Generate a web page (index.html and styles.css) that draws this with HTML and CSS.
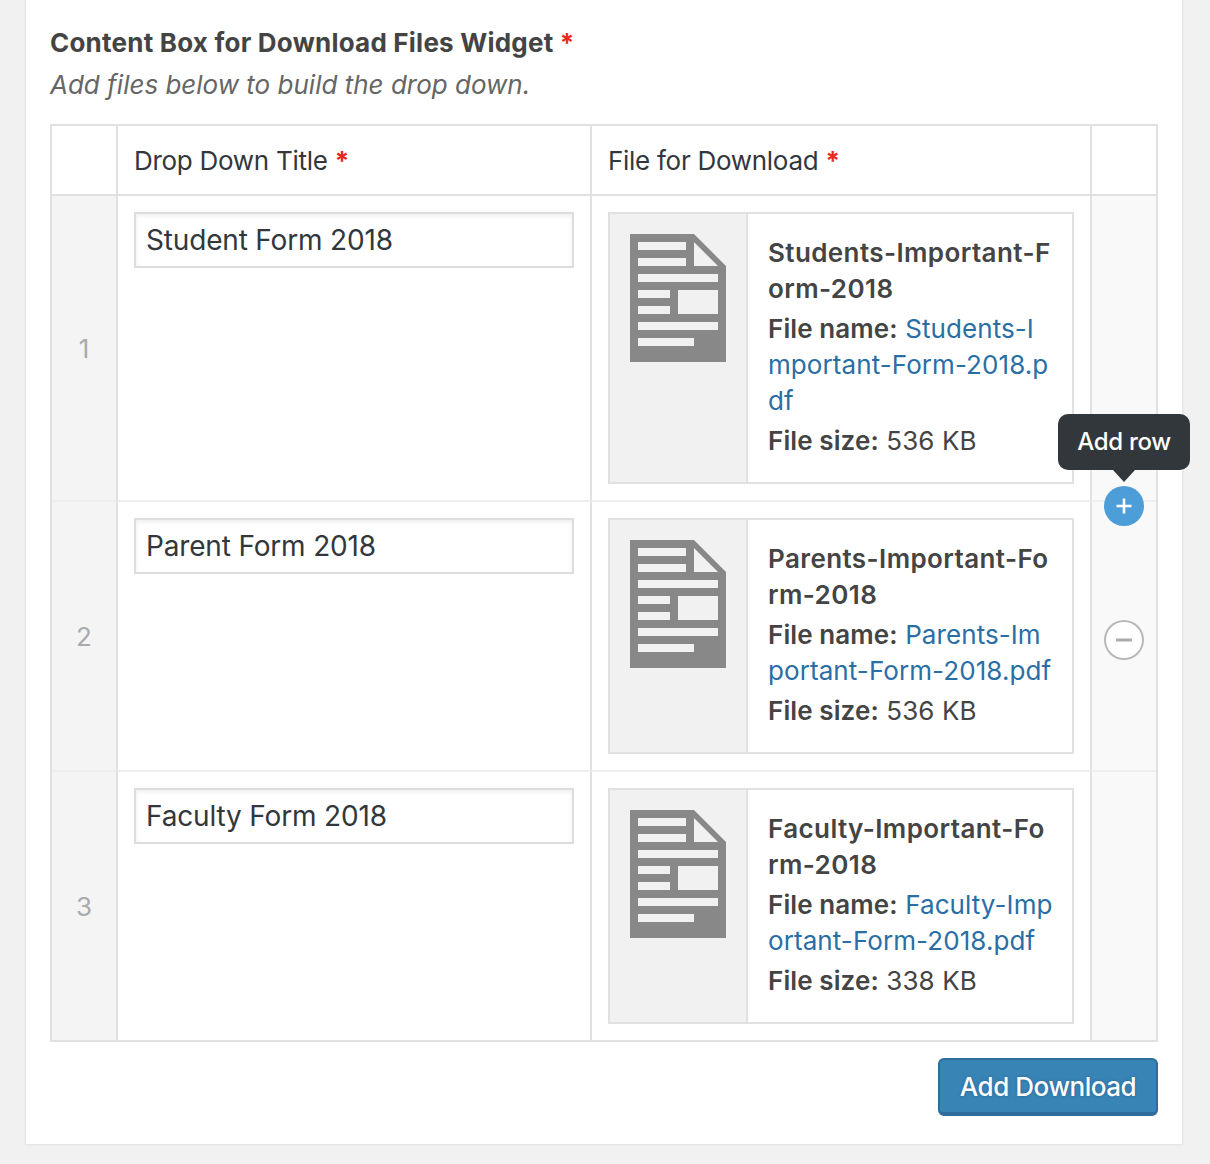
FILE: index.html
```html
<!DOCTYPE html>
<html lang="en">
<head>
<meta charset="utf-8">
<title>Content Box for Download Files Widget</title>
<link rel="stylesheet" href="styles.css">
</head>
<body>
<svg class="sprite" width="0" height="0" aria-hidden="true">
  <symbol id="doc" viewBox="0 0 96 128">
    <path fill="#888" fill-rule="evenodd" d="M0 0H64L96 32V128H0ZM8 8V16H56V8ZM8 24V32H56V24ZM64 8V32H88ZM8 40V48H88V40ZM8 56V64H40V56ZM48 56V80H88V56ZM8 72V80H40V72ZM8 88V96H88V88ZM8 104V112H64V104Z"/>
  </symbol>
</svg>
<main class="panel">
  <h2 class="field-label">Content Box for Download Files Widget <span class="req">*</span></h2>
  <p class="field-desc">Add files below to build the drop down.</p>
  <table class="repeater">
    <thead>
      <tr>
        <th class="col-order"></th>
        <th class="col-title">Drop Down Title <span class="req">*</span></th>
        <th class="col-file">File for Download <span class="req">*</span></th>
        <th class="col-actions"></th>
      </tr>
    </thead>
    <tbody>
      <tr>
        <td class="cell-order">1</td>
        <td class="cell-title"><input class="text-input" type="text" value="Student Form 2018"></td>
        <td class="cell-file">
          <div class="file-box">
            <div class="file-thumb"><svg class="doc-icon"><use href="#doc"/></svg></div>
            <div class="file-info">
              <p class="file-name">Students-Important-Form-2018</p>
              <p><strong>File name:</strong> <a href="#">Students-Important-Form-2018.pdf</a></p>
              <p><strong>File size:</strong> 536 KB</p>
            </div>
          </div>
        </td>
        <td class="cell-actions"></td>
      </tr>
      <tr>
        <td class="cell-order">2</td>
        <td class="cell-title"><input class="text-input" type="text" value="Parent Form 2018"></td>
        <td class="cell-file">
          <div class="file-box">
            <div class="file-thumb"><svg class="doc-icon"><use href="#doc"/></svg></div>
            <div class="file-info">
              <p class="file-name">Parents-Important-Form-2018</p>
              <p><strong>File name:</strong> <a href="#">Parents-Important-Form-2018.pdf</a></p>
              <p><strong>File size:</strong> 536 KB</p>
            </div>
          </div>
        </td>
        <td class="cell-actions">
          <div class="tooltip">Add row</div>
          <button class="round-btn add-btn" type="button" aria-label="Add row">
            <svg viewBox="0 0 40 40" width="40" height="40"><path d="M20 12.5V27.5M12.5 20H27.5" stroke="#fff" stroke-width="2.6" fill="none"/></svg>
          </button>
          <button class="round-btn remove-btn" type="button" aria-label="Remove row">
            <svg viewBox="0 0 40 40" width="40" height="40"><path d="M12 20H28" stroke="#aaa" stroke-width="3" fill="none"/></svg>
          </button>
        </td>
      </tr>
      <tr>
        <td class="cell-order">3</td>
        <td class="cell-title"><input class="text-input" type="text" value="Faculty Form 2018"></td>
        <td class="cell-file">
          <div class="file-box">
            <div class="file-thumb"><svg class="doc-icon"><use href="#doc"/></svg></div>
            <div class="file-info">
              <p class="file-name">Faculty-Important-Form-2018</p>
              <p><strong>File name:</strong> <a href="#">Faculty-Important-Form-2018.pdf</a></p>
              <p><strong>File size:</strong> 338 KB</p>
            </div>
          </div>
        </td>
        <td class="cell-actions"></td>
      </tr>
    </tbody>
  </table>
  <div class="footer-row"><button class="primary-btn" type="button">Add Download</button></div>
</main>
</body>
</html>
```
FILE: styles.css
```css
* { box-sizing: border-box; }
html, body { margin: 0; padding: 0; }
body {
  background: #f1f1f1;
  font-family: Inter, "Liberation Sans", sans-serif;
  font-size: 26px;
  line-height: 36px;
  color: #444;
  height: 1164px;
  overflow: hidden;
}
.sprite { position: absolute; }
.panel {
  margin: 0 28px 0 26px;
  height: 1144px;
  background: #fff;
  padding: 25px 24px 0;
  box-shadow: 0 0 2px 1px #e2e2e2;
}
.field-label { margin: 0; font-size: 26px; line-height: 36px; font-weight: 700; color: #444; letter-spacing: .22px; }
.req { color: #e8291c; font-weight: 700; letter-spacing: 0; }
.field-desc { margin: 6px 0 21px; font-style: italic; color: #666; }
.repeater {
  width: 1108px;
  table-layout: fixed;
  border-collapse: separate;
  border-spacing: 0;
  border: 2px solid #e1e1e1;
}
.col-order { width: 66px; }
.col-title { width: 474px; }
.col-file { width: 500px; }
.col-actions { width: 64px; }
.repeater th {
  height: 70px;
  padding: 2px 16px 0;
  text-align: left;
  font-weight: 400;
  color: #32373c;
  letter-spacing: -.28px;
  border-bottom: 2px solid #e1e1e1;
  border-right: 2px solid #e1e1e1;
}
.repeater th:last-child { border-right: 0; }
.repeater td {
  vertical-align: top;
  padding: 16px;
  border-right: 2px solid #e1e1e1;
  border-bottom: 2px solid #eee;
}
.repeater td:last-child { border-right: 0; }
.repeater tr:last-child td { border-bottom: 0; }
.repeater td.cell-order {
  vertical-align: middle;
  text-align: center;
  padding: 2px 0 0;
  background: #f4f4f4;
  color: #aaa;
}
.repeater td.cell-actions {
  position: relative;
  padding: 0;
  background: #f9f9f9;
}
.text-input {
  display: block;
  width: 100%;
  height: 56px;
  padding: 0 10px;
  border: 2px solid #ddd;
  box-shadow: inset 0 2px 4px rgba(0,0,0,.07);
  background: #fff;
  font: inherit;
  font-size: 28px;
  letter-spacing: -.17px;
  color: #32373c;
  outline: 0;
}
.file-box {
  display: flex;
  border: 2px solid #e1e1e1;
  background: #fff;
}
.file-thumb {
  flex: 0 0 138px;
  padding: 20px;
  background: #f1f1f1;
  border-right: 2px solid #e1e1e1;
}
.doc-icon { display: block; width: 96px; height: 128px; }
.file-info {
  flex: 1;
  min-width: 0;
  padding: 21px 19px 19px 20px;
  word-break: break-all;
  letter-spacing: .1px;
}
.file-info p { margin: 0 0 4px; }
.file-info .file-name { font-weight: 600; color: #444; letter-spacing: .4px; }
.file-info strong { font-weight: 600; }
.file-info a { color: #2a6ea6; text-decoration: none; letter-spacing: .08px; }
.tooltip {
  position: absolute;
  left: -34px;
  top: -88px;
  width: 132px;
  height: 56px;
  border-radius: 10px;
  background: #32373c;
  color: #fff;
  font-size: 24px;
  font-weight: 500;
  letter-spacing: -.3px;
  line-height: 56px;
  text-align: center;
  z-index: 3;
}
.tooltip::after {
  content: "";
  position: absolute;
  left: 55px;
  top: 56px;
  border: 11px solid transparent;
  border-top: 12px solid #32373c;
  border-bottom: 0;
}
.round-btn {
  position: absolute;
  left: 12px;
  width: 40px;
  height: 40px;
  padding: 0;
  border-radius: 50%;
  border: 0;
  display: block;
}
.round-btn svg { display: block; }
.add-btn { top: -16px; background: #4d9dd8; z-index: 2; }
.remove-btn { top: 118px; background: #fff; box-shadow: inset 0 0 0 2px #b8b8b8; }
.footer-row { display: flex; justify-content: flex-end; margin-top: 16px; }
.primary-btn {
  width: 220px;
  height: 58px;
  padding: 1px 0 0;
  border: 2px solid #2f6c9c;
  border-bottom-width: 4px;
  border-radius: 6px;
  background: #3884b5;
  color: #fff;
  font: inherit;
  font-size: 26px;
  font-weight: 500;
  letter-spacing: -.45px;
  text-shadow: 0 0 3px #2a6390;
}
```
